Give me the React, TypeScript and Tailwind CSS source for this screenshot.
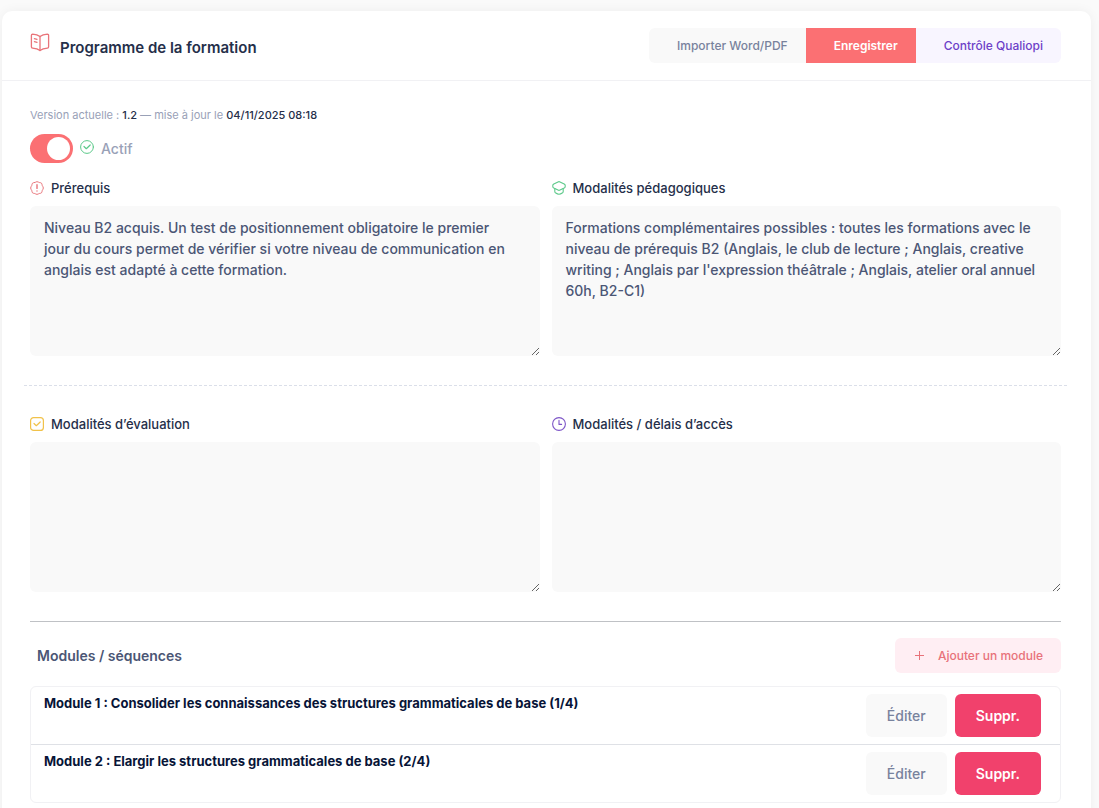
import { useState } from "react";

type Module = { id: number; title: string };

function BookIcon() {
    return (
        <svg className="size-5 self-start" viewBox="0 0 20 20" fill="none" stroke="#e9747a" strokeWidth="1.3" strokeLinejoin="round" strokeLinecap="round" aria-hidden="true">
            <path d="M10 3.6C8 1.9 5 1.3 2.6 1.2Q1.4 1.2 1.4 2.4V13.8Q1.4 15 2.6 15.1C5 15.3 8 16 10 17.6C12 16 15 15.3 17.4 15.1Q18.6 15 18.6 13.8V2.4Q18.6 1.2 17.4 1.2C15 1.3 12 1.9 10 3.6Z" />
            <path d="M10 3.6V17.6M4.4 5.6L7 6.3M4.4 8.6L7 9.3" />
        </svg>
    );
}

function CheckCircleIcon() {
    return (
        <svg className="size-[14px]" viewBox="0 0 14 14" fill="none" stroke="#5cc98a" strokeLinecap="round" strokeLinejoin="round" aria-hidden="true">
            <circle cx="7" cy="7" r="6.4" />
            <path d="M4 6.5L6.3 8.7L10.2 5" strokeWidth="1.2" />
        </svg>
    );
}

function AlertIcon() {
    return (
        <svg className="size-[14px]" viewBox="0 0 14 14" fill="none" stroke="#e9747a" strokeLinecap="round" strokeLinejoin="round" aria-hidden="true">
            <path d="M5.6 1.1Q7 .1 8.4 1.1L9.3 1.5L10.5 1.7Q11.9 2 12 3.4L12.2 4.4L12.9 5.6Q13.8 7 12.9 8.4L12.2 9.6L12 10.6Q11.9 12 10.5 12.3L9.3 12.5L8.4 12.9Q7 13.9 5.6 12.9L4.7 12.5L3.5 12.3Q2.1 12 2 10.6L1.8 9.6L1.1 8.4Q.2 7 1.1 5.6L1.8 4.4L2 3.4Q2.1 2 3.5 1.7L4.7 1.5Z" />
            <path d="M7 3.8V7.4M7 9.9V10" strokeWidth="1.4" />
        </svg>
    );
}

function TeacherIcon() {
    return (
        <svg className="size-[14px]" viewBox="0 0 14 14" fill="none" stroke="#5cc98a" strokeWidth="1.1" strokeLinecap="round" strokeLinejoin="round" aria-hidden="true">
            <path d="M6 .9Q7 .4 8 .9L12.2 3Q13.3 3.6 13.2 4.8V5.4Q13.2 6.4 12.2 7L8 9.1Q7 9.6 6 9.1L1.8 7Q.8 6.4 .8 5.4V4.8Q.7 3.6 1.8 3Z" />
            <path d="M2.8 7.8V10.4Q2.8 11.4 3.8 12C5.8 13.5 8.2 13.5 10.2 12Q11.2 11.4 11.2 10.4V7.8" />
        </svg>
    );
}

function CheckSquareIcon() {
    return (
        <svg className="size-[14px]" viewBox="0 0 14 14" fill="none" stroke="#f1c24a" strokeWidth="1.2" strokeLinecap="round" strokeLinejoin="round" aria-hidden="true">
            <rect x=".6" y=".6" width="12.8" height="12.8" rx="3" />
            <path d="M4 6.5L6.3 8.7L10.2 5" />
        </svg>
    );
}

function ClockIcon() {
    return (
        <svg className="size-[14px]" viewBox="0 0 14 14" fill="none" stroke="#7d55c7" strokeWidth="1.1" strokeLinecap="round" strokeLinejoin="round" aria-hidden="true">
            <circle cx="7" cy="7" r="6.4" />
            <path d="M7 3.4V7.4H9.6" />
        </svg>
    );
}

type FieldProps = {
    id: string;
    label: string;
    icon: React.ReactNode;
    defaultValue?: string;
};

function Field({ id, label, icon, defaultValue = "" }: FieldProps) {
    return (
        <div className="flex flex-col gap-[7px]">
            <label htmlFor={id} className="flex h-5 items-center gap-[7px] text-[13px] font-medium text-[#252f4a]">
                <span className="pb-[2px]">{icon}</span>
                {label}
            </label>
            <textarea
                id={id}
                defaultValue={defaultValue}
                className="block h-[150px] w-full resize rounded-md bg-[#f9f9f9] py-[11px] pr-6 pl-[14px] text-[14px] leading-[21px] font-medium text-[#4b5675] outline-none"
            />
        </div>
    );
}

export default function ProgrammeFormation() {
    const [active, setActive] = useState(true);
    const [modules, setModules] = useState<Module[]>([
        { id: 1, title: "Module 1 : Consolider les connaissances des structures grammaticales de base (1/4)" },
        { id: 2, title: "Module 2 : Elargir les structures grammaticales de base (2/4)" },
    ]);

    function addModule() {
        const id = Date.now();
        setModules([...modules, { id, title: `Module ${modules.length + 1}` }]);
    }

    function removeModule(id: number) {
        setModules(modules.filter((m) => m.id !== id));
    }

    return (
        <div className="min-h-screen bg-[#fafafa] pt-[11px] pr-2 pl-[2px] font-['Inter',sans-serif] text-[13px]">
            <main className="min-h-screen rounded-t-[10px] bg-white pb-8 shadow-[0_0_12px_rgba(0,0,0,0.05)]">
                <header className="flex items-center justify-between border-b border-[#f1f1f4] py-[17px] pr-[30px] pl-7">
                    <h1 className="flex h-[26px] items-end gap-[10px] text-[15px] leading-[22px] font-semibold text-[#252f4a]">
                        <BookIcon />
                        Programme de la formation
                    </h1>
                    <div className="flex h-[35px] overflow-hidden rounded-md text-[12px] font-medium">
                        <button type="button" className="bg-[#f9f9f9] pr-[18px] pl-7 text-[#78829d]">Importer Word/PDF</button>
                        <button type="button" className="bg-[#fb7073] pr-[18px] pl-7 font-semibold text-white">Enregistrer</button>
                        <button type="button" className="bg-[#f8f5ff] pr-[18px] pl-7 text-[#6d3fc8]">Contrôle Qualiopi</button>
                    </div>
                </header>

                <div className="pt-6 pr-[30px] pl-7">
                    <p className="text-[11px] leading-5 text-[#99a1b7]">
                        Version actuelle : <span className="font-medium text-[#252f4a]">1.2</span> — mise à jour le{" "}
                        <span className="font-medium text-[#252f4a]">04/11/2025 08:18</span>
                    </p>

                    <label className="mt-[9px] flex items-center gap-[7px] text-[14px] font-medium text-[#99a1b7]">
                        <input
                            type="checkbox"
                            role="switch"
                            checked={active}
                            onChange={(e) => setActive(e.target.checked)}
                            className="h-[29px] w-[43px] appearance-none rounded-full bg-gray-300 p-[3px] before:block before:size-[23px] before:rounded-full before:bg-white checked:bg-[#fb7073] checked:before:ml-[14px]"
                        />
                        <span className="pb-1">
                            <CheckCircleIcon />
                        </span>
                        {active ? "Actif" : "Inactif"}
                    </label>

                    <div className="mt-4 grid grid-cols-2 gap-3">
                        <Field
                            id="prerequis"
                            label="Prérequis"
                            icon={<AlertIcon />}
                            defaultValue="Niveau B2 acquis. Un test de positionnement obligatoire le premier jour du cours permet de vérifier si votre niveau de communication en anglais est adapté à cette formation."
                        />
                        <Field
                            id="pedagogie"
                            label="Modalités pédagogiques"
                            icon={<TeacherIcon />}
                            defaultValue="Formations complémentaires possibles : toutes les formations avec le niveau de prérequis B2 (Anglais, le club de lecture ; Anglais, creative writing ; Anglais par l'expression théâtrale ; Anglais, atelier oral annuel 60h, B2-C1)"
                        />
                    </div>

                    <div className="-mx-[6px] my-[29px] border-t border-dashed border-[#dbdfe9]" />

                    <div className="grid grid-cols-2 gap-3">
                        <Field id="evaluation" label="Modalités d’évaluation" icon={<CheckSquareIcon />} />
                        <Field id="acces" label="Modalités / délais d’accès" icon={<ClockIcon />} />
                    </div>

                    <hr className="mt-[29px] border-[#bfc1c5]" />

                    <div className="mt-4 flex items-center justify-between pl-[7px]">
                        <h2 className="text-[14px] font-semibold text-[#4b5675]">Modules / séquences</h2>
                        <button
                            type="button"
                            onClick={addModule}
                            className="flex h-[35px] items-center gap-[14px] rounded-md bg-[#ffeef3] pr-[18px] pl-5 text-[12px] font-medium text-[#e8727a]"
                        >
                            <svg className="size-[9px]" viewBox="0 0 9 9" stroke="currentColor" aria-hidden="true">
                                <path d="M4.5 0V9M0 4.5H9" />
                            </svg>
                            Ajouter un module
                        </button>
                    </div>

                    <ul className="mt-[13px] divide-y divide-[#dfe1e6] rounded-md border border-[#f1f1f4]">
                        {modules.map((m) => (
                            <li key={m.id} className="flex items-start gap-2 py-[7px] pr-[19px] pl-[13px]">
                                <span className="flex-1 text-[13px] leading-[18px] font-bold text-[#071437]">{m.title}</span>
                                <button type="button" className="h-[43px] rounded-md bg-[#f9f9f9] px-[21px] text-[14px] font-medium text-[#78829d]">
                                    Éditer
                                </button>
                                <button
                                    type="button"
                                    onClick={() => removeModule(m.id)}
                                    className="h-[43px] rounded-md bg-[#f1416c] px-[21px] text-[14px] font-semibold text-white"
                                >
                                    Suppr.
                                </button>
                            </li>
                        ))}
                    </ul>
                </div>
            </main>
        </div>
    );
}
